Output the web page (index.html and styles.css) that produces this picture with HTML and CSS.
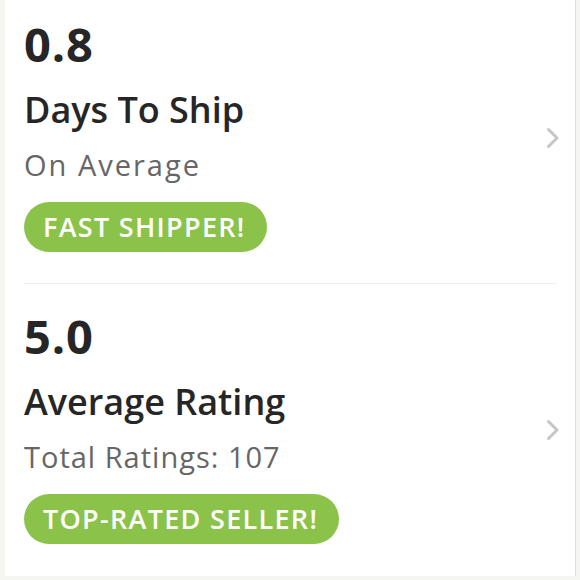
FILE: index.html
```html
<!DOCTYPE html>
<html>
<head>
<meta charset="utf-8">
<link rel="stylesheet" href="styles.css">
</head>
<body>
<div class="card">
  <div class="row">
    <div class="info">
      <div class="value">0.8</div>
      <div class="title">Days To Ship</div>
      <div class="sub sub-wide">On Average</div>
      <div class="badge">FAST SHIPPER!</div>
    </div>
    <svg class="chev" width="14" height="22" viewBox="0 0 14 22"><path d="M2.5 2.5 L11 11 L2.5 19.5" fill="none" stroke="#c6c6c6" stroke-width="3" stroke-linecap="round" stroke-linejoin="round"/></svg>
  </div>
  <div class="row">
    <div class="info">
      <div class="value">5.0</div>
      <div class="title">Average Rating</div>
      <div class="sub">Total Ratings: 107</div>
      <div class="badge">TOP-RATED SELLER!</div>
    </div>
    <svg class="chev" width="14" height="22" viewBox="0 0 14 22"><path d="M2.5 2.5 L11 11 L2.5 19.5" fill="none" stroke="#c6c6c6" stroke-width="3" stroke-linecap="round" stroke-linejoin="round"/></svg>
  </div>
</div>
</body>
</html>
```

FILE: styles.css
```css
html, body {
  margin: 0;
  padding: 0;
  height: 580px;
  overflow: hidden;
  background: #f5f5f2;
  font-family: "Open Sans", "Liberation Sans", sans-serif;
}
.card {
  margin-top: -7px;
  margin-left: 5px;
  width: 570px;
  height: 583px;
  background: #fff;
  border-right: 1px solid #dcdcdc;
  display: flex;
  flex-direction: column;
}
.row {
  display: flex;
  align-items: center;
  margin-left: 19px;
  margin-right: 18px;
  height: 291px;
  box-sizing: border-box;
  border-bottom: 1px solid #eeeeec;
}
.row:last-child {
  border-bottom: none;
  height: 292px;
}
.info {
  flex: 1;
  padding-top: 22px;
  padding-bottom: 32px;
}
.value {
  font-size: 47px;
  line-height: 58px;
  font-weight: 700;
  letter-spacing: 0.8px;
  color: #262626;
}
.title {
  margin-top: 15px;
  font-size: 36px;
  line-height: 44px;
  font-weight: 600;
  color: #262626;
}
.sub {
  margin-top: 15px;
  font-size: 29px;
  line-height: 36px;
  font-weight: 400;
  letter-spacing: 1px;
  color: #666;
}
.sub-wide {
  letter-spacing: 2px;
}
.badge {
  display: inline-block;
  margin-top: 19px;
  height: 50px;
  line-height: 50px;
  padding: 0 21px 0 19px;
  border-radius: 25px;
  background: #8bc34a;
  color: #fff;
  font-size: 27px;
  font-weight: 600;
  letter-spacing: 1.3px;
}
.chev {
  flex: none;
  margin-right: -3px;
}
```
